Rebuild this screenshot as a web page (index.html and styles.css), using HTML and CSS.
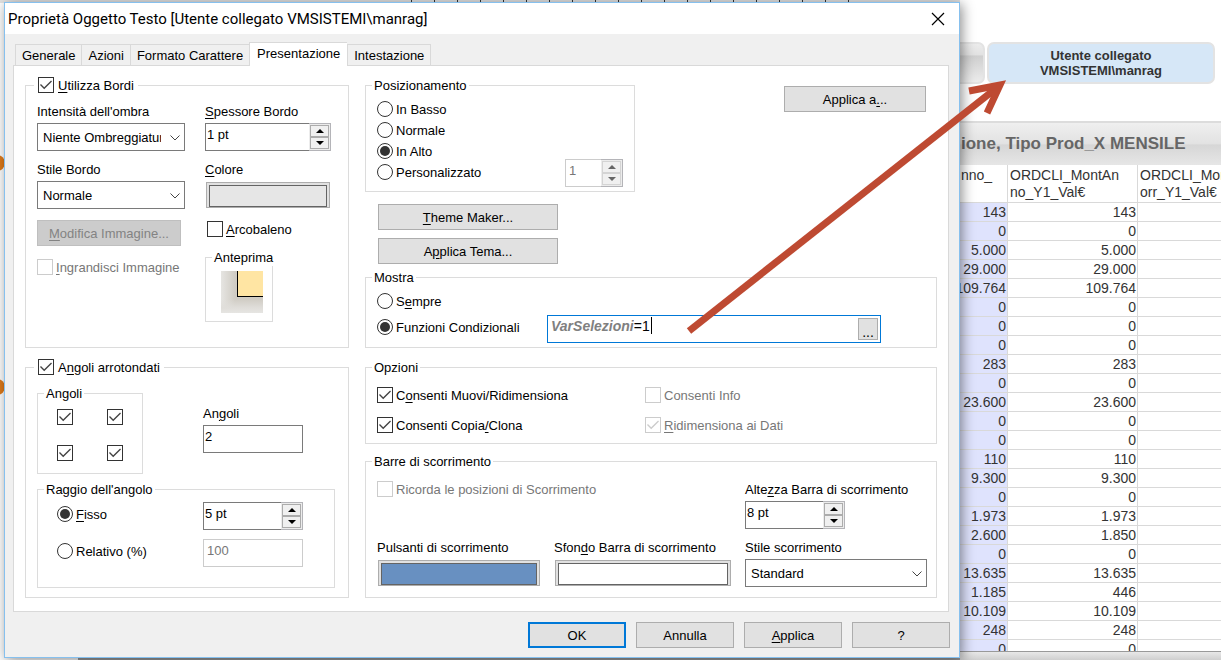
FILE: index.html
```html
<!DOCTYPE html>
<html lang="it">

<head>
    <meta charset="UTF-8">
    <meta name="viewport" content="width=device-width, initial-scale=1.0">
    <title>Proprietà Oggetto Testo</title>
    <link rel="stylesheet" href="styles.css">
</head>

<body>

    <div class="ruler"></div>
    <span class="dot dot-first"></span>
    <span class="dot dot-second"></span>
    <div class="sheet-edge"></div>

    <!-- report behind the dialog -->
    <section class="report">
        <div class="objects">
            <div class="grey-object"></div>
            <div class="text-object">Utente collegato<br>VMSISTEMI\manrag</div>
        </div>
        <h2 class="chart-title">ione, Tipo Prod_X MENSILE</h2>
        <div class="table-box">
            <table>
                <colgroup>
                    <col class="col-first">
                    <col class="col-other">
                    <col class="col-other">
                </colgroup>
                <thead>
                    <tr>
                        <th>nno_</th>
                        <th>ORDCLI_MontAn<br>no_Y1_Val€</th>
                        <th>ORDCLI_MontC<br>orr_Y1_Val€</th>
                    </tr>
                </thead>
                <tbody>
                    <tr><td>143</td><td>143</td><td></td></tr>
                    <tr><td>0</td><td>0</td><td></td></tr>
                    <tr><td>5.000</td><td>5.000</td><td></td></tr>
                    <tr><td>29.000</td><td>29.000</td><td></td></tr>
                    <tr><td>109.764</td><td>109.764</td><td></td></tr>
                    <tr><td>0</td><td>0</td><td></td></tr>
                    <tr><td>0</td><td>0</td><td></td></tr>
                    <tr><td>0</td><td>0</td><td></td></tr>
                    <tr><td>283</td><td>283</td><td></td></tr>
                    <tr><td>0</td><td>0</td><td></td></tr>
                    <tr><td>23.600</td><td>23.600</td><td></td></tr>
                    <tr><td>0</td><td>0</td><td></td></tr>
                    <tr><td>0</td><td>0</td><td></td></tr>
                    <tr><td>110</td><td>110</td><td></td></tr>
                    <tr><td>9.300</td><td>9.300</td><td></td></tr>
                    <tr><td>0</td><td>0</td><td></td></tr>
                    <tr><td>1.973</td><td>1.973</td><td></td></tr>
                    <tr><td>2.600</td><td>1.850</td><td></td></tr>
                    <tr><td>0</td><td>0</td><td></td></tr>
                    <tr><td>13.635</td><td>13.635</td><td></td></tr>
                    <tr><td>1.185</td><td>446</td><td></td></tr>
                    <tr><td>10.109</td><td>10.109</td><td></td></tr>
                    <tr><td>248</td><td>248</td><td></td></tr>
                    <tr><td>0</td><td>0</td><td></td></tr>
                </tbody>
            </table>
        </div>
        <div class="scroll-track"></div>
    </section>

    <form class="dialog">
        <header class="titlebar">
            <h1>Proprietà Oggetto Testo [Utente collegato VMSISTEMI\manrag]</h1>
            <button type="button" class="close" aria-label="Chiudi">
                <svg width="14" height="14" viewBox="0 0 14 14"><path d="M1 1L13 13M13 1L1 13" stroke="#000" stroke-width="1.2" fill="none"/></svg>
            </button>
        </header>

        <div class="dialog-body">
            <nav class="tabs">
                <button type="button">Generale</button>
                <button type="button">Azioni</button>
                <button type="button">Formato Carattere</button>
                <button type="button" class="active">Presentazione</button>
                <button type="button">Intestazione</button>
            </nav>

            <main class="page">
                <div class="left">
                    <fieldset class="borders">
                        <legend class="check"><input type="checkbox" id="bordi" checked><label for="bordi"><u>U</u>tilizza Bordi</label></legend>
                        <div class="stack">
                            <div class="field">
                                <label for="ombra">Intensità dell'ombra</label>
                                <div class="select">
                                    <select id="ombra"><option>Niente Ombreggiatura</option></select>
                                    <svg width="10" height="6" viewBox="0 0 10 6"><path d="M0.5 0.5L5 5L9.5 0.5" stroke="#444" fill="none"/></svg>
                                </div>
                            </div>
                            <div class="field">
                                <label for="stile">Stile Bordo</label>
                                <div class="select">
                                    <select id="stile"><option>Normale</option></select>
                                    <svg width="10" height="6" viewBox="0 0 10 6"><path d="M0.5 0.5L5 5L9.5 0.5" stroke="#444" fill="none"/></svg>
                                </div>
                            </div>
                            <button type="button" class="btn image-btn" disabled><u>M</u>odifica Immagine...</button>
                            <div class="check"><input type="checkbox" id="ingrandisci" disabled><label for="ingrandisci"><u>I</u>ngrandisci Immagine</label></div>
                        </div>
                        <div class="stack">
                            <div class="field">
                                <label for="spessore"><u>S</u>pessore Bordo</label>
                                <div class="spin">
                                    <input type="text" id="spessore" value="1 pt">
                                    <div class="arrows">
                                        <button type="button" class="up" aria-label="Aumenta"></button>
                                        <button type="button" class="down" aria-label="Diminuisci"></button>
                                    </div>
                                </div>
                            </div>
                            <div class="field">
                                <label for="colore"><u>C</u>olore</label>
                                <button type="button" class="swatch" id="colore"></button>
                            </div>
                            <div class="check rainbow"><input type="checkbox" id="arcobaleno"><label for="arcobaleno"><u>A</u>rcobaleno</label></div>
                            <fieldset class="preview">
                                <legend>Anteprima</legend>
                                <div class="preview-shade"><div class="preview-corner"></div></div>
                            </fieldset>
                        </div>
                    </fieldset>

                    <fieldset class="corners">
                        <legend class="check"><input type="checkbox" id="arrotondati" checked><label for="arrotondati">A<u>n</u>goli arrotondati</label></legend>
                        <div class="corner-row">
                            <fieldset class="corner-grid">
                                <legend>Angoli</legend>
                                <input type="checkbox" aria-label="Alto sinistra" checked>
                                <input type="checkbox" aria-label="Alto destra" checked>
                                <input type="checkbox" aria-label="Basso sinistra" checked>
                                <input type="checkbox" aria-label="Basso destra" checked>
                            </fieldset>
                            <div class="field corner-field">
                                <label for="angoli">An<u>g</u>oli</label>
                                <input type="text" id="angoli" value="2">
                            </div>
                        </div>
                        <fieldset class="radius">
                            <legend>Raggio dell'angolo</legend>
                            <div class="check"><input type="radio" name="raggio" id="fisso" checked><label for="fisso"><u>F</u>isso</label></div>
                            <div class="spin">
                                <input type="text" value="5 pt" aria-label="Raggio fisso">
                                <div class="arrows">
                                    <button type="button" class="up" aria-label="Aumenta"></button>
                                    <button type="button" class="down" aria-label="Diminuisci"></button>
                                </div>
                            </div>
                            <div class="check"><input type="radio" name="raggio" id="relativo"><label for="relativo">Relativo (%)</label></div>
                            <input type="text" value="100" aria-label="Raggio relativo" disabled>
                        </fieldset>
                    </fieldset>
                </div>

                <div class="right">
                    <div class="top-row">
                        <fieldset class="position">
                            <legend>Posizionamento</legend>
                            <div class="radios">
                                <div class="check"><input type="radio" name="pos" id="basso"><label for="basso">In Basso</label></div>
                                <div class="check"><input type="radio" name="pos" id="normale"><label for="normale">Normale</label></div>
                                <div class="check"><input type="radio" name="pos" id="alto" checked><label for="alto">In Alto</label></div>
                                <div class="check"><input type="radio" name="pos" id="personalizzato"><label for="personalizzato">Personalizzato</label></div>
                            </div>
                            <div class="spin">
                                <input type="text" value="1" aria-label="Livello" disabled>
                                <div class="arrows">
                                    <button type="button" class="up" aria-label="Aumenta" disabled></button>
                                    <button type="button" class="down" aria-label="Diminuisci" disabled></button>
                                </div>
                            </div>
                        </fieldset>
                        <button type="button" class="btn apply-to">Applica a<u>.</u>..</button>
                    </div>

                    <div class="themes">
                        <button type="button" class="btn"><u>T</u>heme Maker...</button>
                        <button type="button" class="btn">A<u>p</u>plica Tema...</button>
                    </div>

                    <fieldset class="show">
                        <legend>Mostra</legend>
                        <div class="check"><input type="radio" name="mostra" id="sempre"><label for="sempre">S<u>e</u>mpre</label></div>
                        <div class="condition">
                            <div class="check"><input type="radio" name="mostra" id="condizionali" checked><label for="condizionali">Funzioni Condizionali</label></div>
                            <div class="expression">
                                <span class="variable">VarSelezioni</span>
                                <input type="text" value="=1" aria-label="Espressione">
                                <span class="caret"></span>
                                <button type="button" class="btn more">...</button>
                            </div>
                        </div>
                    </fieldset>

                    <fieldset class="options">
                        <legend>Opzioni</legend>
                        <div class="check"><input type="checkbox" id="muovi" checked><label for="muovi">C<u>o</u>nsenti Muovi/Ridimensiona</label></div>
                        <div class="check"><input type="checkbox" id="info" disabled><label for="info">Consenti Info</label></div>
                        <div class="check"><input type="checkbox" id="copia" checked><label for="copia">Consenti Copia<u>/</u>Clona</label></div>
                        <div class="check"><input type="checkbox" id="ridimensiona" checked disabled><label for="ridimensiona"><u>R</u>idimensiona ai Dati</label></div>
                    </fieldset>

                    <fieldset class="scrollbars">
                        <legend>Barre di scorrimento</legend>
                        <div class="check remember"><input type="checkbox" id="ricorda" disabled><label for="ricorda">Ricorda le posizioni di Scorrimento</label></div>
                        <div class="field">
                            <label for="altezza">Alte<u>z</u>za Barra di scorrimento</label>
                            <div class="spin">
                                <input type="text" id="altezza" value="8 pt">
                                <div class="arrows">
                                    <button type="button" class="up" aria-label="Aumenta"></button>
                                    <button type="button" class="down" aria-label="Diminuisci"></button>
                                </div>
                            </div>
                        </div>
                        <div class="field">
                            <label for="pulsanti">Pulsanti di scorrimento</label>
                            <button type="button" class="swatch blue" id="pulsanti"></button>
                        </div>
                        <div class="field">
                            <label for="sfondo">Sfon<u>d</u>o Barra di scorrimento</label>
                            <button type="button" class="swatch white" id="sfondo"></button>
                        </div>
                        <div class="field">
                            <label for="scorrimento">Stile scorrimento</label>
                            <div class="select">
                                <select id="scorrimento"><option>Standard</option></select>
                                <svg width="10" height="6" viewBox="0 0 10 6"><path d="M0.5 0.5L5 5L9.5 0.5" stroke="#444" fill="none"/></svg>
                            </div>
                        </div>
                    </fieldset>
                </div>
            </main>

            <footer class="actions">
                <button type="button" class="btn default">OK</button>
                <button type="button" class="btn">Annulla</button>
                <button type="button" class="btn"><u>A</u>pplica</button>
                <button type="button" class="btn">?</button>
            </footer>
        </div>
    </form>

    <svg class="arrow" width="330" height="270" viewBox="0 0 330 270">
        <path d="M4 261L309 20" stroke="#be4a32" stroke-width="7" fill="none"/>
        <path d="M284 21L315 15L302 43" stroke="#be4a32" stroke-width="7" stroke-miterlimit="10" fill="none"/>
    </svg>

</body>

</html>
```
FILE: styles.css
```css
* {
    box-sizing: border-box;
}

body {
    margin: 0;
    height: 100vh;
    overflow: hidden;
    position: relative;
    background: #fff;
    color: #000;
    font-family: "Liberation Sans", Arial, sans-serif;
    font-size: 13px;
    line-height: 18px;
}

button,
input,
select {
    font: inherit;
    color: inherit;
    margin: 0;
}

u {
    text-decoration: underline;
    text-underline-offset: 2px;
}

/* desktop around the dialog */
.ruler {
    position: absolute;
    top: 0;
    left: 0;
    width: 960px;
    height: 3px;
    background: repeating-linear-gradient(to right, #333 0, #333 1px, transparent 1px, transparent 23px) 411px 0 / 460px 2px no-repeat, #e2e2e2;
}

.dot {
    position: absolute;
    left: -11px;
    width: 16px;
    height: 16px;
    border-radius: 8px;
    background: #e07b1a;
}

.dot-first {
    top: 155px;
}

.dot-second {
    top: 379px;
}

.sheet-edge {
    position: absolute;
    left: 78px;
    bottom: 0;
    width: 882px;
    height: 4px;
    background: #999;
}

.report {
    display: flex;
    flex-direction: column;
    height: 100vh;
    margin-left: 950px;
    padding-top: 42px;
    overflow: hidden;
}

.objects {
    display: flex;
    gap: 2px;
    margin-right: 6px;
    margin-bottom: 37px;
}

.grey-object {
    width: 35px;
    border: 2px solid #e3e3e3;
    border-radius: 7px;
    background: linear-gradient(to bottom, #ececec 0, #e2e2e2 28%, #cfcfcf 32%, #ececec 100%);
}

.text-object {
    flex: 1;
    padding: 4px;
    border: 2px solid #e3e3e3;
    border-radius: 7px;
    background: #d6e7f7;
    color: #333;
    font-weight: bold;
    line-height: 15px;
    text-align: center;
}

.chart-title {
    margin: 0;
    padding: 0 11px;
    border-top: 2px solid #dcdcdc;
    background: linear-gradient(to bottom, #efefef 0, #e2e2e2 50%, #d6d6d6 52%, #e6e6e6 100%);
    color: #666;
    font-size: 17px;
    line-height: 42px;
    white-space: nowrap;
}

.table-box {
    flex: 1;
    overflow: hidden;
}

table {
    width: 318px;
    table-layout: fixed;
    border-collapse: separate;
    border-spacing: 0;
    color: #333;
    font-size: 14px;
}

.col-first {
    width: 58px;
}

.col-other {
    width: 130px;
}

th,
td {
    border-right: 1px solid #d9d9d9;
    border-bottom: 1px solid #d9d9d9;
    white-space: nowrap;
}

th {
    height: 38px;
    padding: 2px 2px 1px;
    font-weight: normal;
    line-height: 17px;
    text-align: left;
    vertical-align: top;
}

th:first-child {
    padding-left: 11px;
}

td {
    height: 19px;
    padding: 0 1px;
    line-height: 18px;
    text-align: right;
}

td:first-child {
    background: #dfe3fd;
}

.scroll-track {
    height: 9px;
    border-top: 1px solid #999;
    background: linear-gradient(to bottom, #e8e8e8, #cfcfcf);
}

/* dialog window */
.dialog {
    position: absolute;
    top: 2px;
    left: 4px;
    width: 956px;
    border: 1px solid #86c0ee;
    background: #f0f0f0;
    box-shadow: 2px 2px 12px rgba(0, 0, 0, 0.45);
}

.titlebar {
    display: flex;
    justify-content: space-between;
    align-items: center;
    height: 31px;
    padding: 0 14px 0 3px;
    background: #fff;
}

.titlebar h1 {
    margin: 0;
    font-family: Roboto, "Open Sans", sans-serif;
    font-size: 15px;
    font-weight: normal;
}

.close {
    display: flex;
    padding: 0;
    border: none;
    background: none;
}

.dialog-body {
    padding: 8px 9px 9px 8px;
}

.tabs {
    display: flex;
    align-items: flex-end;
    height: 24px;
    padding-left: 2px;
    margin-bottom: -1px;
    position: relative;
}

.tabs button {
    height: 22px;
    padding: 1px 6px 0;
    border: 1px solid #d9d9d9;
    border-right: none;
    background: #f0f0f0;
    line-height: 20px;
}

.tabs button:last-child {
    border-right: 1px solid #d9d9d9;
}

.tabs .active {
    height: 24px;
    padding: 0 7px 2px;
    border-bottom: none;
    background: #fff;
}

.page {
    display: flex;
    gap: 16px;
    margin-right: 1px;
    padding: 10px 11px 13px;
    border: 1px solid #d9d9d9;
    background: #fff;
}

.left {
    width: 324px;
}

.right {
    flex: 1;
}

fieldset {
    min-width: 0;
    margin: 0;
    padding: 0 11px;
    border: 1px solid #dcdcdc;
}

/* text sits one pixel low in its row */
label,
legend {
    height: 18px;
    line-height: 20px;
}

legend {
    margin-left: -5px;
    padding: 0 2px;
    white-space: nowrap;
}

/* shared controls */
.check {
    display: flex;
    align-items: center;
    gap: 3px;
    height: 18px;
    white-space: nowrap;
}

legend.check {
    gap: 4px;
    margin-left: -3px;
    padding: 0 4px;
}

input[type="checkbox"],
input[type="radio"] {
    appearance: none;
    flex: none;
    display: grid;
    place-items: center;
    width: 16px;
    height: 16px;
    border: 1px solid #333;
    background: #fff;
}

input[type="radio"] {
    border-radius: 8px;
}

input[type="checkbox"]:checked::before {
    content: "";
    width: 12px;
    height: 10px;
    background: #444;
    clip-path: polygon(0 50%, 8% 40%, 35% 72%, 92% 6%, 100% 16%, 35% 92%);
}

input[type="radio"]:checked::before {
    content: "";
    width: 10px;
    height: 10px;
    border-radius: 5px;
    background: #333;
}

input[type="checkbox"]:disabled {
    border-color: #ccc;
}

input[type="checkbox"]:disabled::before {
    background: #ccc;
}

input:disabled + label {
    color: #777;
}

input[type="text"] {
    width: 100px;
    height: 28px;
    padding: 0 1px 5px;
    border: 1px solid #7a7a7a;
    background: #fff;
}

input[type="text"]:disabled {
    padding-left: 3px;
    border-color: #ccc;
    color: #777;
}

.field label {
    display: block;
    margin-bottom: 3px;
    white-space: nowrap;
}

.select {
    position: relative;
}

.select select {
    display: block;
    appearance: none;
    width: 100%;
    height: 28px;
    padding: 2px 23px 0 5px;
    border: 1px solid #7a7a7a;
    border-radius: 0;
    background: #fff;
}

.select svg {
    position: absolute;
    top: 12px;
    right: 5px;
    pointer-events: none;
}

.spin {
    display: flex;
    width: 100px;
    height: 28px;
}

.spin input[type="text"] {
    flex: 1;
    min-width: 0;
    border-right: none;
}

.arrows {
    display: flex;
    flex-direction: column;
    width: 22px;
    padding: 1px;
    border: 1px solid #b4b4b8;
    border-left: none;
    background: #ececec;
}

.arrows button {
    flex: 1;
    display: grid;
    place-items: center;
    padding: 0;
    border: 1px solid #acacac;
    background: #f0f0f0;
}

.arrows button::before {
    content: "";
    border: 4px solid transparent;
}

.arrows .up::before {
    border-top: none;
    border-bottom-color: #000;
}

.arrows .down::before {
    border-bottom: none;
    border-top-color: #000;
}

.arrows button:disabled {
    border-color: #d4d4d4;
}

.arrows .up:disabled::before {
    border-bottom-color: #666;
}

.arrows .down:disabled::before {
    border-top-color: #666;
}

.btn {
    height: 26px;
    padding: 2px 0 0;
    border: 1px solid #adadad;
    background: #e1e1e1;
    line-height: 22px;
}

.btn:disabled {
    border-color: #bfbfbf;
    background: #ccc;
    color: #838383;
}

.swatch {
    display: block;
    width: calc(100% - 2px);
    height: 26px;
    margin: 4px 1px 1px;
    padding: 2px;
    border: 1px solid #adadad;
    background: #e1e1e1;
}

.swatch::before {
    content: "";
    display: block;
    height: 20px;
    border: 1px solid #646464;
    background: #e6e6e6;
}

.swatch.blue::before {
    background: #6890c1;
}

.swatch.white::before {
    background: #fff;
}

/* left column */
.borders {
    display: grid;
    grid-template-columns: 148px 126px;
    column-gap: 20px;
    padding-top: 8px;
    padding-bottom: 25px;
    margin-bottom: 10px;
}

.stack .field {
    margin-bottom: 9px;
}

.stack .spin {
    width: 126px;
}

.image-btn {
    width: 144px;
    margin: 2px 0 12px;
}

.rainbow {
    margin: 12px 0 10px 2px;
}

.preview {
    width: 68px;
    padding: 5px 9px 8px 15px;
}

.preview legend {
    margin-left: -9px;
}

.preview-shade {
    height: 42px;
    padding-left: 16px;
    background: linear-gradient(to top, #e6e5e2 0, #e0deda 5px, rgba(208, 204, 196, 0) 14px), linear-gradient(to right, #e6e5e2 0, #d0ccc4 14px);
}

.preview-corner {
    height: 26px;
    border-left: 1px solid #000;
    border-bottom: 1px solid #000;
    background: #ffe5a3;
}

.corners {
    padding-top: 8px;
    padding-bottom: 9px;
}

.corner-row {
    display: flex;
    gap: 60px;
    margin-bottom: 6px;
}

.corner-grid {
    display: grid;
    grid-template-columns: 50px 16px;
    row-gap: 20px;
    width: 106px;
    padding: 7px 19px 12px;
}

.corner-grid legend,
.radius legend {
    margin-left: -13px;
}

.corner-field {
    margin-top: 20px;
}

.radius {
    display: grid;
    grid-template-columns: 146px 100px;
    row-gap: 9px;
    width: 298px;
    padding: 4px 19px 20px;
}

.radius .check {
    height: 24px;
}

/* right column */
.top-row {
    display: flex;
    justify-content: space-between;
    align-items: flex-start;
    margin-bottom: 12px;
}

.position {
    display: flex;
    justify-content: space-between;
    align-items: flex-end;
    width: 270px;
    padding-top: 6px;
    padding-bottom: 4px;
}

.radios {
    display: grid;
    row-gap: 3px;
    padding-bottom: 6px;
}

.position .spin {
    width: 58px;
}

.apply-to {
    width: 142px;
    margin: 10px 11px 0;
}

.themes {
    display: flex;
    flex-direction: column;
    gap: 8px;
    width: 180px;
    margin: 0 0 4px 13px;
}

.show {
    padding-top: 6px;
    padding-bottom: 4px;
    margin-bottom: 10px;
}

.condition {
    display: grid;
    grid-template-columns: 170px 334px;
    margin-top: 5px;
}

.condition .check {
    height: 24px;
}

.expression {
    display: flex;
    height: 28px;
    padding: 1px 2px 1px 3px;
    border: 1px solid #0078d7;
    background: #fff;
    font-size: 14px;
}

.variable {
    color: #808080;
    font-style: italic;
    font-weight: bold;
}

.expression input[type="text"] {
    width: 17px;
    height: 18px;
    padding: 0;
    border: none;
}

.caret {
    width: 1px;
    height: 17px;
    background: #000;
}

.more {
    width: 20px;
    height: 22px;
    margin: 1px 0 0 auto;
}

.options {
    display: grid;
    grid-template-columns: 268px 1fr;
    row-gap: 12px;
    padding-top: 10px;
    padding-bottom: 9px;
    margin-bottom: 8px;
}

.scrollbars {
    display: grid;
    grid-template-columns: 164px 178px 182px;
    justify-content: space-between;
    row-gap: 9px;
    padding: 10px 9px 10px 11px;
}

.remember {
    grid-column: 1 / 3;
}

.actions {
    display: flex;
    justify-content: flex-end;
    gap: 10px;
    margin-top: 10px;
}

.actions .btn {
    width: 98px;
}

.actions .default {
    border: 2px solid #0078d7;
    line-height: 20px;
}

/* pointer from the condition to the text object */
.arrow {
    position: absolute;
    top: 70px;
    left: 685px;
    pointer-events: none;
}
```
